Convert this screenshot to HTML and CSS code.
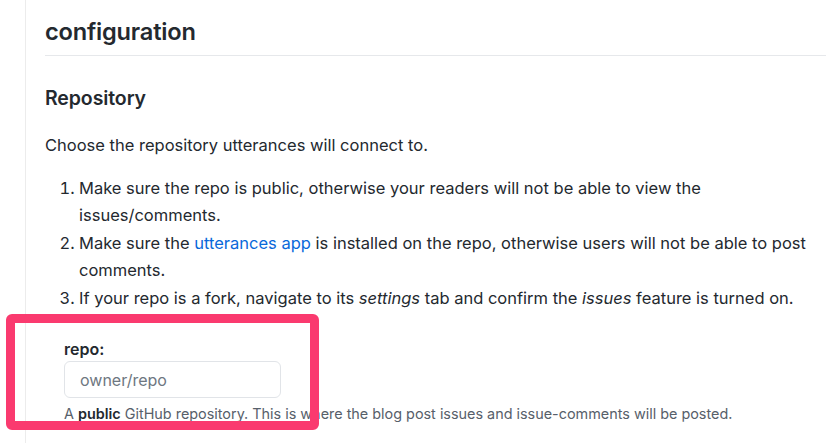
FILE: index.html
```html
<!DOCTYPE html>
<html lang="en">
<head>
<meta charset="utf-8">
<title>configuration</title>
<link rel="stylesheet" href="styles.css">
</head>
<body>
<div class="rail">
  <main class="content">
    <h2 class="h2">configuration</h2>
    <h3 class="h3">Repository</h3>
    <p class="para">Choose the repository utterances will connect to.</p>
    <ol class="steps">
      <li>Make sure the repo is public, otherwise your readers will not be able to view the issues/comments.</li>
      <li>Make sure the <a class="link" href="#">utterances app</a> is installed on the repo, otherwise users will not be able to post comments.</li>
      <li>If your repo is a fork, navigate to its <em>settings</em> tab and confirm the <em>issues</em> feature is turned on.</li>
    </ol>
    <form class="form">
      <label class="label" for="repo">repo:</label>
      <input class="input" id="repo" type="text" placeholder="owner/repo">
      <p class="note">A <strong>public</strong> GitHub repository. This is where the blog post issues and issue-comments will be posted.</p>
    </form>
  </main>
  <div class="highlight"></div>
</div>
</body>
</html>
```
FILE: styles.css
```css
html, body {
  margin: 0;
  padding: 0;
  background: #ffffff;
}
body {
  font-family: Inter, "Noto Sans", "Liberation Sans", sans-serif;
  color: #24292f;
  font-size: 16.5px;
  line-height: 27px;
  overflow: hidden;
}
.rail {
  position: relative;
  margin-left: 25px;
  border-left: 1px solid #ececec;
  min-height: 443px;
}
.content {
  padding-left: 19px;
  padding-top: 17px;
}
.h2 {
  margin: 0;
  font-size: 23.6px;
  font-weight: 600;
  line-height: 30px;
  padding-bottom: 8px;
  border-bottom: 1px solid #e6e8eb;
  letter-spacing: -0.2px;
}
.h3 {
  margin: 29px 0 0;
  font-size: 19.5px;
  font-weight: 600;
  line-height: 26px;
  letter-spacing: -0.1px;
}
.para {
  margin: 21px 0 0;
}
.steps {
  margin: 16px 0 0;
  padding-left: 34px;
  padding-right: 12px;
}
.steps li + li {
  margin-top: 1px;
}
.link {
  color: #0969da;
  text-decoration: none;
}
.form {
  padding-left: 19px;
  margin-top: 27px;
}
.label {
  display: block;
  font-size: 16px;
  font-weight: 600;
  line-height: 20px;
}
.input {
  display: block;
  box-sizing: border-box;
  width: 217px;
  height: 37px;
  margin-top: 2px;
  padding: 0 15px;
  border: 1px solid #e1e4e8;
  border-radius: 6px;
  font-family: inherit;
  font-size: 16px;
  color: #24292f;
  background: #fff;
}
.input::placeholder {
  color: #6e7781;
}
.note {
  margin: 6px 0 0;
  font-size: 14.4px;
  line-height: 20px;
  color: #57606a;
}
.note strong {
  color: #24292f;
  font-weight: 600;
}
.highlight {
  position: absolute;
  left: -20px;
  top: 314px;
  width: 313px;
  height: 116px;
  box-sizing: border-box;
  border: 9px solid #fa3a6f;
  border-radius: 6px;
}
```
